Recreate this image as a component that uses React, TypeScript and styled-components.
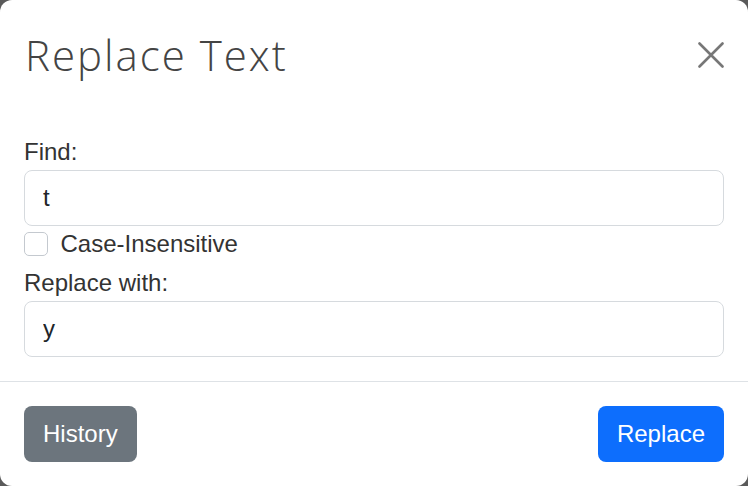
import React from "react";
import styled, { createGlobalStyle } from "styled-components";

const Global = createGlobalStyle`
  html, body { margin: 0; padding: 0; }
  body {
    width: 748px;
    height: 486px;
    background: #5a5a5a;
    font-family: "Liberation Sans", Arial, sans-serif;
    overflow: hidden;
  }
  * { box-sizing: border-box; }
`;

const Modal = styled.div`
  width: 748px;
  height: 486px;
  background: #ffffff;
  border-radius: 12px;
  display: flex;
  flex-direction: column;
  overflow: hidden;
`;

const Header = styled.div`
  display: flex;
  align-items: center;
  justify-content: space-between;
  padding: 24px 24px 24px 24px;
`;

const Title = styled.h5`
  margin: 0;
  font-family: "Open Sans", sans-serif;
  font-weight: 300;
  font-size: 42px;
  line-height: 62px;
  color: #444444;
  letter-spacing: 2px;
  padding-left: 1px;
`;

const CloseButton = styled.button`
  width: 26px;
  height: 26px;
  padding: 0;
  border: none;
  background: transparent;
  display: flex;
  align-items: center;
  justify-content: center;
  cursor: pointer;
`;

const Body = styled.div`
  padding: 24px 24px 24px 24px;
  display: flex;
  flex-direction: column;
`;

const Label = styled.label<{ $top?: number }>`
  display: block;
  font-size: 24px;
  line-height: 36px;
  color: #333333;
  margin-top: ${(p) => p.$top ?? 0}px;
`;

const TextInput = styled.input`
  display: block;
  width: 100%;
  height: 56px;
  padding: 0 18px;
  font-family: "Liberation Sans", Arial, sans-serif;
  font-size: 24px;
  color: #212529;
  background: #ffffff;
  border: 1px solid #d6dade;
  border-radius: 8px;
  outline: none;
`;

const CheckRow = styled.div`
  display: flex;
  align-items: flex-start;
  gap: 13px;
  height: 38px;
`;

const CheckBox = styled.span`
  width: 23.5px;
  height: 23.5px;
  margin-top: 6px;
  border: 1px solid #c4c9cf;
  border-radius: 5px;
  background: #ffffff;
  flex: none;
`;

const CheckLabel = styled.span`
  font-size: 24px;
  line-height: 36px;
  color: #333333;
`;

const Footer = styled.div`
  border-top: 1px solid #dee2e6;
  padding: 24px;
  display: flex;
  justify-content: space-between;
  align-items: center;
`;

const Button = styled.button<{ $variant: "secondary" | "primary" }>`
  height: 56px;
  padding: 0 19px;
  border: none;
  border-radius: 8px;
  font-family: "Liberation Sans", Arial, sans-serif;
  font-size: 24px;
  color: #ffffff;
  background: ${(p) => (p.$variant === "primary" ? "#0d6efd" : "#6c757d")};
  cursor: pointer;
`;

export default function App() {
  return (
    <>
      <Global />
      <Modal>
        <Header>
          <Title>Replace Text</Title>
          <CloseButton aria-label="Close">
            <svg width="26" height="26" viewBox="0 0 26 26">
              <path
                d="M1.5 1.5 L24.5 24.5 M24.5 1.5 L1.5 24.5"
                stroke="#777777"
                strokeWidth="2.6"
                strokeLinecap="round"
              />
            </svg>
          </CloseButton>
        </Header>
        <Body>
          <Label>Find:</Label>
          <TextInput defaultValue="t" />
          <CheckRow>
            <CheckBox />
            <CheckLabel>Case-Insensitive</CheckLabel>
          </CheckRow>
          <Label $top={1}>Replace with:</Label>
          <TextInput defaultValue="y" />
        </Body>
        <Footer>
          <Button $variant="secondary">History</Button>
          <Button $variant="primary">Replace</Button>
        </Footer>
      </Modal>
    </>
  );
}
